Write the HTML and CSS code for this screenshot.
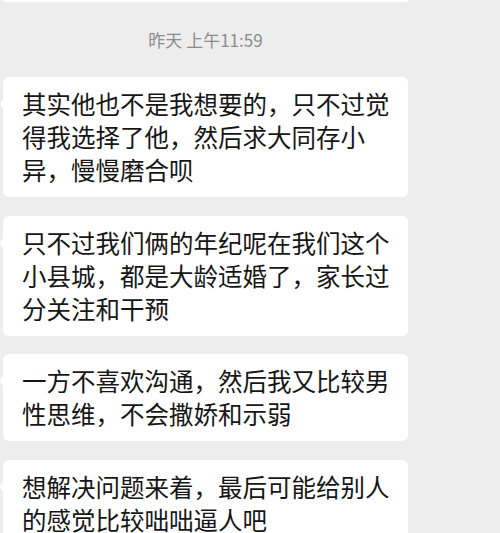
FILE: index.html
```html
<!DOCTYPE html>
<html lang="zh-CN">
<head>
<meta charset="utf-8">
<link rel="stylesheet" href="styles.css">
</head>
<body>
<div class="chat">
  <div class="bubble-cut"></div>
  <div class="time">昨天 上午11:59</div>
  <div class="bubble">其实他也不是我想要的，只不过觉<br>得我选择了他，然后求大同存小<br>异，慢慢磨合呗</div>
  <div class="bubble">只不过我们俩的年纪呢在我们这个<br>小县城，都是大龄适婚了，家长过<br>分关注和干预</div>
  <div class="bubble">一方不喜欢沟通，然后我又比较男<br>性思维，不会撒娇和示弱</div>
  <div class="bubble">想解决问题来着，最后可能给别人<br>的感觉比较咄咄逼人吧</div>
</div>
</body>
</html>
```
FILE: styles.css
```css
html, body {
  margin: 0;
  padding: 0;
  background: #ededed;
  height: 100%;
  overflow: hidden;
}
body {
  font-family: "Noto Sans CJK SC", "Noto Sans", sans-serif;
}
.chat {
  margin-left: 3px;
  width: 405px;
  display: flex;
  flex-direction: column;
}
.bubble-cut {
  height: 2px;
  background: #fff;
  border-radius: 0 0 4px 4px;
}
.time {
  margin-top: 26px;
  height: 24px;
  line-height: 24px;
  font-size: 17px;
  color: #8c8c8c;
  text-align: center;
  margin-bottom: 25px;
}
.bubble {
  position: relative;
  background: #fff;
  border-radius: 6px;
  padding: 10px 8px 11px 19px;
  font-size: 24.5px;
  line-height: 33px;
  color: #161616;
  white-space: nowrap;
  margin-bottom: 18.5px;
}
.bubble::before {
  content: "";
  position: absolute;
  left: -3px;
  top: 22px;
  border-top: 5px solid transparent;
  border-bottom: 5px solid transparent;
  border-right: 3px solid #fff;
}
```
